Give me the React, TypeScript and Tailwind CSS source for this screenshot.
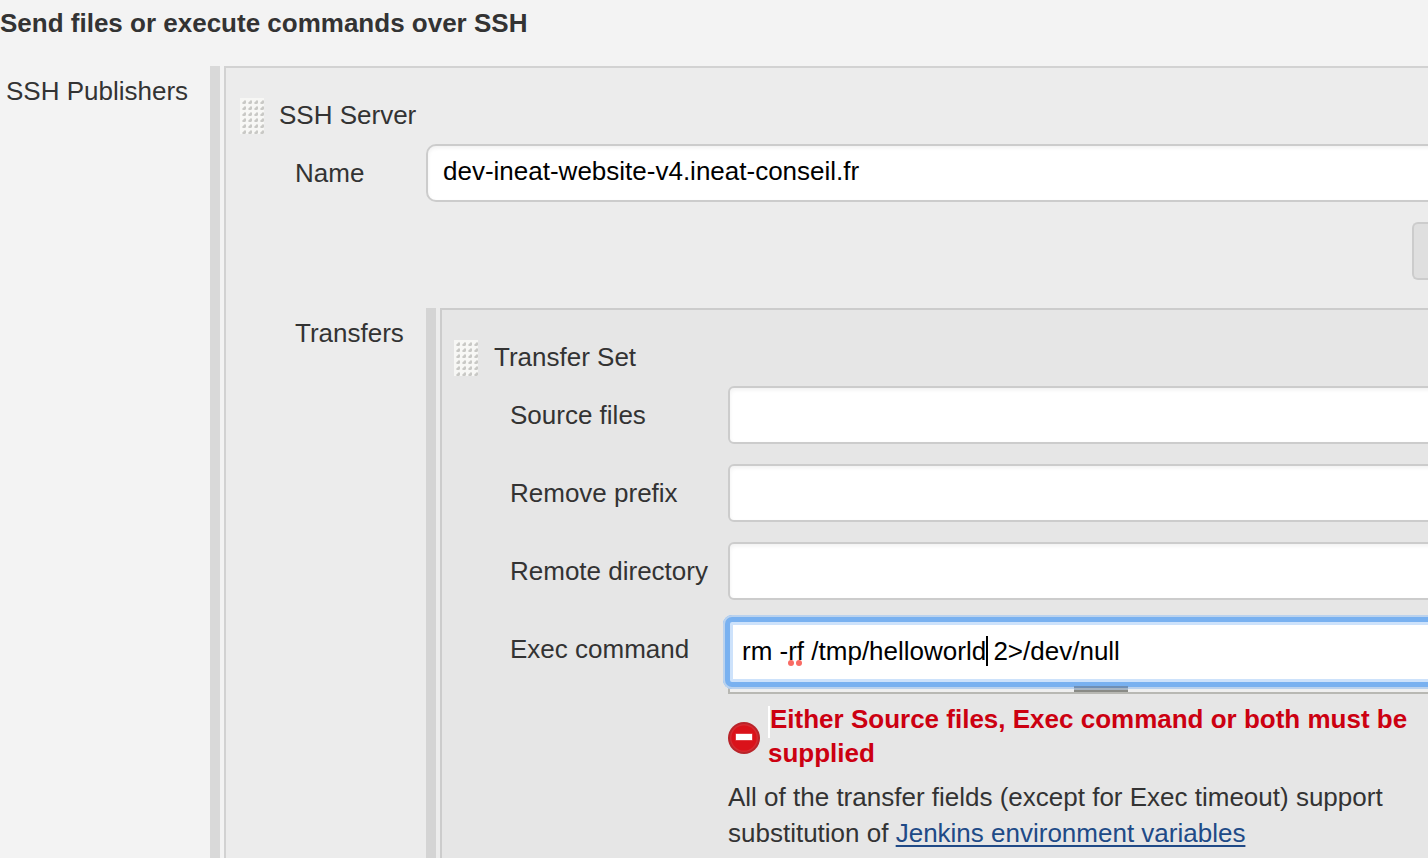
import type { ReactNode } from 'react';

function Grip() {
  return (
    <svg className="block h-9 w-6 shrink-0" viewBox="0 0 24 36" aria-hidden="true">
      <defs>
        <pattern id="dots" width="6" height="6" patternUnits="userSpaceOnUse">
          <rect width="6" height="6" fill="#f7f7f5" />
          <path d="M2 6V4h1V3h1V2h2v4z" fill="#dededb" />
          <path d="M3 6V4h1V3h2v2H5v1z" fill="#c9c9c6" />
        </pattern>
      </defs>
      <rect width="24" height="36" fill="url(#dots)" />
    </svg>
  );
}

function ErrorIcon() {
  return (
    <svg className="block h-8 w-8 shrink-0" viewBox="0 0 32 32" aria-hidden="true">
      <circle cx="16" cy="16" r="16" fill="#b8242a" />
      <circle cx="16" cy="16" r="14" fill="#d62a31" />
      <circle cx="16" cy="16" r="12.6" fill="#da121a" />
      <rect x="7.5" y="11.5" width="17" height="7" fill="#e8686c" />
      <rect x="8" y="12" width="16" height="6" fill="#fff" />
    </svg>
  );
}

function Field({ label, children }: { label: string; children: ReactNode }) {
  return (
    <div className="flex h-[78px] items-start">
      <div className="w-[218px] shrink-0 pt-[11px]">{label}</div>
      {children}
    </div>
  );
}

function TextInput() {
  return (
    <div className="-mr-3 h-[58px] flex-1 rounded-[6px] border-2 border-[#ccc] bg-white shadow-[inset_0_2px_4px_rgba(0,0,0,0.06)]" />
  );
}

function ExecCommand() {
  return (
    <div className="relative flex h-[74px] shrink-0 border-b-2 border-l-2 border-[#b8b8b3] bg-[linear-gradient(to_bottom,#e6e6e6_50%,#efefef_50%)]">
      <div className="absolute -left-[7px] -right-3 -top-[5px] h-[74px] rounded-[9px] bg-white shadow-[inset_0_0_0_2px_#bad2ee,inset_0_0_0_7px_#79b1f0,inset_0_0_0_10px_#cde2fb]" />
      <div className="relative flex h-9 self-start whitespace-pre pl-3 pt-[13px] text-black">
        <span>rm -</span>
        <span className="relative">
          rf
          <span className="absolute left-0 top-[27px] flex gap-[2px]">
            <i className="h-[6px] w-[6px] rounded-full bg-[#f96b64]" />
            <i className="h-[6px] w-[6px] rounded-full bg-[#f96b64]" />
          </span>
        </span>
        <span> /tmp/helloworld</span>
        <span className="relative">
          <span className="absolute left-0 top-[3px] h-[30px] w-[2px] bg-black" />
          {' '}2&gt;/dev/null
        </span>
      </div>
      <div className="absolute left-[344px] top-[66px] flex h-[6px] w-[54px] flex-col">
        <div className="h-[2px] bg-[#6f8fb5]" />
        <div className="h-[2px] bg-[#a5b3c2]" />
        <div className="h-[2px] bg-[#8a8b86]" />
      </div>
    </div>
  );
}

function TransferSet() {
  return (
    <div className="flex-1 border-l-2 border-t-2 border-[#ccc] bg-[#e6e6e6]">
      <div className="flex h-[76px] items-start pl-3 pt-[29px]">
        <div className="pt-[1px]">
          <Grip />
        </div>
        <span className="pl-4">Transfer Set</span>
      </div>
      <div className="pl-[68px]">
        <Field label="Source files">
          <TextInput />
        </Field>
        <Field label="Remove prefix">
          <TextInput />
        </Field>
        <Field label="Remote directory">
          <TextInput />
        </Field>
        <div className="flex items-start">
          <div className="w-[218px] shrink-0 pt-[11px]">Exec command</div>
          <div className="flex flex-1 flex-col">
            <ExecCommand />
            <div className="mt-2 flex h-[76px] items-start">
              <div className="pt-5">
                <ErrorIcon />
              </div>
              <div className="ml-2 font-bold leading-[34px] text-[#cc0011]">
                <div className="flex h-[34px]">
                  <span className="mt-1 h-8 w-[2px] bg-white" />
                  <span>Either Source files, Exec command or both must be</span>
                </div>
                <div>supplied</div>
              </div>
            </div>
            <div className="pt-[1px]">
              <div>All of the transfer fields (except for Exec timeout) support</div>
              <div>
                substitution of{' '}
                <a className="text-[#204a87] underline decoration-2 underline-offset-[3px]" href="#">
                  Jenkins environment variables
                </a>
              </div>
            </div>
          </div>
        </div>
      </div>
    </div>
  );
}

export default function App() {
  return (
    <main className="flex h-[858px] w-[1428px] flex-col overflow-hidden whitespace-nowrap bg-[#f3f3f3] font-['Liberation_Sans',Arial,sans-serif] text-[26px] leading-9 text-[#333]">
      <h1 className="h-[66px] shrink-0 pt-[5px] font-bold">Send files or execute commands over SSH</h1>
      <section className="flex min-h-0 flex-1">
        <div className="w-[210px] shrink-0 pl-[6px] pt-[7px]">SSH Publishers</div>
        <div className="mr-1 w-[10px] shrink-0 bg-[#d9d9d9]" />
        <div className="flex flex-1 flex-col border-l-2 border-t-2 border-[#d2d2d2] bg-[#ececec]">
          <div className="flex h-[76px] shrink-0 items-start pl-[14px] pt-[29px]">
            <div className="pt-[1px]">
              <Grip />
            </div>
            <span className="pl-[15px]">SSH Server</span>
          </div>
          <div className="flex h-[78px] shrink-0 items-start pl-[69px]">
            <div className="w-[131px] shrink-0 pt-[11px]">Name</div>
            <div className="-mr-3 h-[58px] flex-1 rounded-[10px] border-2 border-[#ccc] bg-white pl-[15px] pt-[7px] text-black shadow-[inset_0_2px_4px_rgba(0,0,0,0.06)]">
              dev-ineat-website-v4.ineat-conseil.fr
            </div>
          </div>
          <div className="flex h-[86px] shrink-0 items-start justify-end">
            <button className="h-[58px] w-4 rounded-l-[6px] border-2 border-r-0 border-[#ccc] bg-[#dfdfdf]" aria-label="Advanced" />
          </div>
          <div className="flex min-h-0 flex-1 pl-[69px]">
            <div className="w-[131px] shrink-0 pt-[7px]">Transfers</div>
            <div className="mr-1 w-[10px] shrink-0 bg-[#d4d4d4]" />
            <TransferSet />
          </div>
        </div>
      </section>
    </main>
  );
}
